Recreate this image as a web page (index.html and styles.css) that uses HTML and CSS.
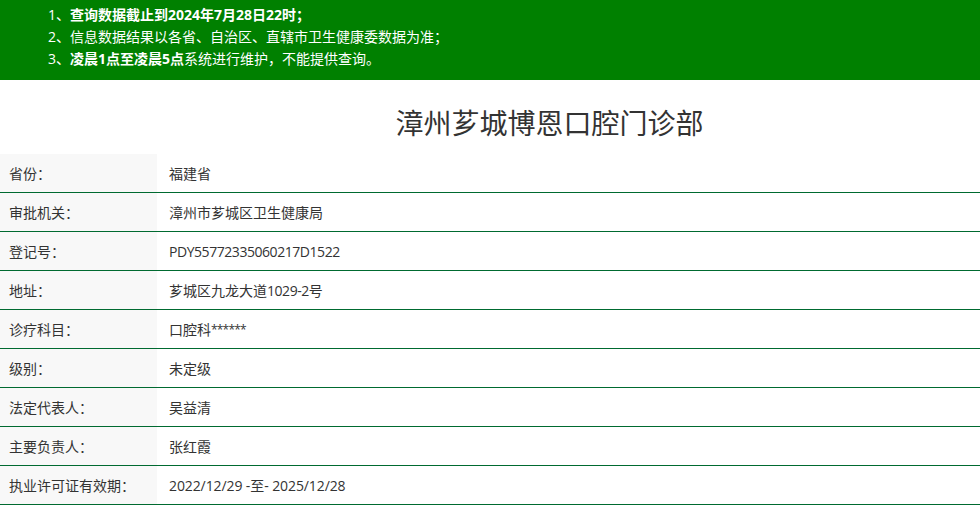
FILE: index.html
```html
<!DOCTYPE html>
<html lang="zh-CN">
<head>
<meta charset="utf-8">
<title>漳州芗城博恩口腔门诊部</title>
<link rel="stylesheet" href="styles.css">
</head>
<body>
<div class="notice">
  <p>1、<b>查询数据截止到2024年7月28日22时；</b></p>
  <p>2、信息数据结果以各省、自治区、直辖市卫生健康委数据为准；</p>
  <p>3、<b>凌晨1点至凌晨5点</b>系统进行维护，不能提供查询。</p>
</div>
<h1 class="title">漳州芗城博恩口腔门诊部</h1>
<div class="info">
  <div class="row"><div class="label">省份：</div><div class="value">福建省</div></div>
  <div class="row"><div class="label">审批机关：</div><div class="value">漳州市芗城区卫生健康局</div></div>
  <div class="row"><div class="label">登记号：</div><div class="value"><span class="latin">PDY55772335060217D1522</span></div></div>
  <div class="row"><div class="label">地址：</div><div class="value">芗城区九龙大道<span class="latin">1029-2</span>号</div></div>
  <div class="row"><div class="label">诊疗科目：</div><div class="value">口腔科<span class="stars">******</span></div></div>
  <div class="row"><div class="label">级别：</div><div class="value">未定级</div></div>
  <div class="row"><div class="label">法定代表人：</div><div class="value">吴益清</div></div>
  <div class="row"><div class="label">主要负责人：</div><div class="value">张红霞</div></div>
  <div class="row"><div class="label">执业许可证有效期：</div><div class="value"><span class="date">2022/12/29 -</span>至<span class="date">- 2025/12/28</span></div></div>
</div>
</body>
</html>
```
FILE: styles.css
```css
* { box-sizing: border-box; }
body {
  margin: 0;
  font-family: "Open Sans", "Noto Sans CJK SC", sans-serif;
  color: #333;
  background: #fff;
}
.notice {
  background: #008000;
  color: #fff;
  height: 80px;
  padding: 4px 0 0 48px;
  font-size: 14px;
}
.notice p {
  margin: 0;
  line-height: 22px;
}
.notice b { font-weight: bold; }
.title {
  margin: 0;
  padding: 23px 0 11px 119px;
  height: 74px;
  text-align: center;
  font-size: 28px;
  line-height: 40px;
  font-weight: normal;
  color: #333;
}
.info { display: flex; flex-direction: column; }
.row {
  display: flex;
  height: 39px;
  border-bottom: 1px solid #006a30;
  font-size: 14px;
}
.label {
  width: 157px;
  background: #f8f8f8;
  padding-left: 9px;
  display: flex;
  align-items: center;
}
.value {
  flex: 1;
  padding-left: 12px;
  display: flex;
  align-items: center;
  white-space: pre;
}
.latin { letter-spacing: -0.45px; }
.date { letter-spacing: -0.1px; }
.stars { font-size: 12px; letter-spacing: -0.8px; }
```
